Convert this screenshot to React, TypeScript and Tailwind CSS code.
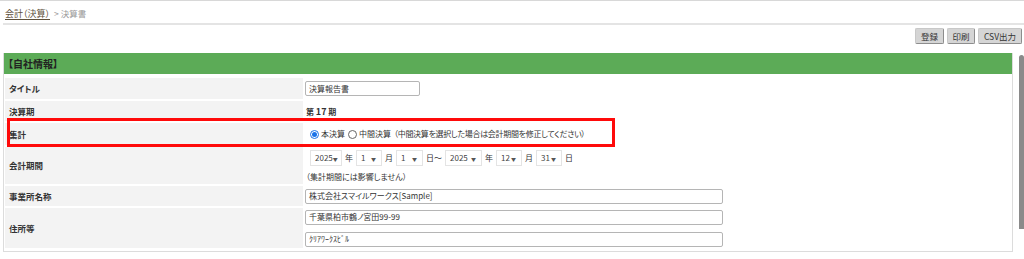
import React from 'react';

const font = "font-['Noto_Sans_CJK_JP','Liberation_Sans',sans-serif] [font-feature-settings:'palt']";

function Select({ value, w }: { value: string; w: string }) {
  return (
    <span className={`${w} h-[16px] flex items-center justify-between pl-[4px] pr-[5px] bg-white border border-[#e4e4e4] text-[#444]`}>
      <span>{value}</span>
      <span className="text-[5px] text-[#555]">▼</span>
    </span>
  );
}

function Row({ label, h, children }: { label: string; h: string; children: React.ReactNode }) {
  return (
    <div className={`flex ${h}`}>
      <div className="w-[298px] shrink-0 bg-[#f3f3f3] flex items-center pl-[4px] text-[8.5px] font-bold text-[#333]">{label}</div>
      <div className="flex-1 flex flex-col justify-center pl-[2px] text-[8px] text-[#333]">{children}</div>
    </div>
  );
}

function TextBox({ value, w, plain }: { value: string; w: string; plain?: boolean }) {
  return (
    <div className={`${w} h-[15px] border border-[#b5b5b5] rounded-[2px] bg-white flex items-center px-[3px] text-[#333] ${plain ? '[font-feature-settings:normal]' : ''}`}>
      {value}
    </div>
  );
}

export default function App() {
  return (
    <div className={`relative w-[1024px] h-[259px] overflow-hidden bg-white text-[9px] leading-none ${font}`}>
      <div className="border-t border-[#d8d8d8]" />
      <div className="ml-[3px] h-[24px] border-b-2 border-[#e4e4e4] flex items-center pl-[2px] pt-[3px] gap-[4px]">
        <span className="text-[#5e513c] underline underline-offset-2">会計（決算）</span>
        <span className="text-[8.5px] text-[#999]">&gt; 決算書</span>
      </div>

      <div className="flex justify-end gap-[3px] pr-[2px] mt-[3px]">
        {[
          { t: '登録', w: 'w-[29px]' },
          { t: '印刷', w: 'w-[28px]' },
          { t: 'CSV出力', w: 'w-[44px]' },
        ].map(b => (
          <span
            key={b.t}
            className={`${b.w} h-[16px] flex items-center justify-center bg-[#d5d5d5] border border-[#c8c8c8] border-r-[#8d8d8d] border-b-[#8d8d8d] rounded-[2px] text-[8.5px] text-[#333]`}
          >
            {b.t}
          </span>
        ))}
      </div>

      <div className="flex mt-[9px]">
        <div className="ml-[3px] w-[1010px] h-[199px] border-x border-b border-[#dcdcdc]">
          <div className="h-[21px] bg-[#5cab57] flex items-center pl-[4px] text-[10px] font-bold text-[#222]">【自社情報】</div>
          <div className="flex flex-col gap-[2px] px-[1px] pt-[4px]">
            <Row label="タイトル" h="h-[21px]">
              <TextBox value="決算報告書" w="w-[115px]" />
            </Row>
            <Row label="決算期" h="h-[20px]">
              <div className="font-bold pl-[1px]">第 <span className="text-[9px]">17</span> 期</div>
            </Row>
            <Row label="集計" h="h-[22px]">
              <div className="flex items-center pl-[5px]">
                <span className="w-[9px] h-[9px] rounded-full border border-[#1a73e8] flex items-center justify-center">
                  <span className="w-[5px] h-[5px] rounded-full bg-[#1a73e8]" />
                </span>
                <span className="ml-[2px]">本決算</span>
                <span className="ml-[3px] w-[9px] h-[9px] rounded-full border border-[#666] bg-white" />
                <span className="ml-[2px]">中間決算</span>
                <span className="ml-[3px] tracking-[-0.3px]">（中間決算を選択した場合は会計期間を修正してください）</span>
              </div>
            </Row>
            <Row label="会計期間" h="h-[37px]">
              <div className="flex flex-col gap-[7px] pl-[5px]">
                <div className="flex items-center gap-[3px]">
                  <Select value="2025" w="w-[32px]" />
                  <span>年</span>
                  <Select value="1" w="w-[26px]" />
                  <span>月</span>
                  <Select value="1" w="w-[27px]" />
                  <span>日～</span>
                  <Select value="2025" w="w-[37px]" />
                  <span>年</span>
                  <Select value="12" w="w-[26px]" />
                  <span>月</span>
                  <Select value="31" w="w-[26px]" />
                  <span>日</span>
                </div>
                <div className="-ml-[4px]">（集計期間には影響しません）</div>
              </div>
            </Row>
            <Row label="事業所名称" h="h-[20px]">
              <TextBox value="株式会社スマイルワークス[Sample]" w="w-[418px]" />
            </Row>
            <Row label="住所等" h="h-[40px]">
              <div className="flex flex-col gap-[7px]">
                <TextBox value="千葉県柏市鶴ノ宮田99-99" w="w-[418px]" />
                <TextBox value="ｸﾘｱﾜｰｸｽﾋﾞﾙ" w="w-[418px]" plain />
              </div>
            </Row>
          </div>
        </div>
        <div className="flex-1 flex justify-end">
          <div className="w-[5px] h-[174px] mt-[2px] bg-[#8a8a8a] rounded-t-full rounded-b-[3px]" />
        </div>
      </div>

      <div className="absolute left-[7px] top-[118px] w-[608px] h-[29px] border-[3px] border-[#ff0a0a]" />
    </div>
  );
}
